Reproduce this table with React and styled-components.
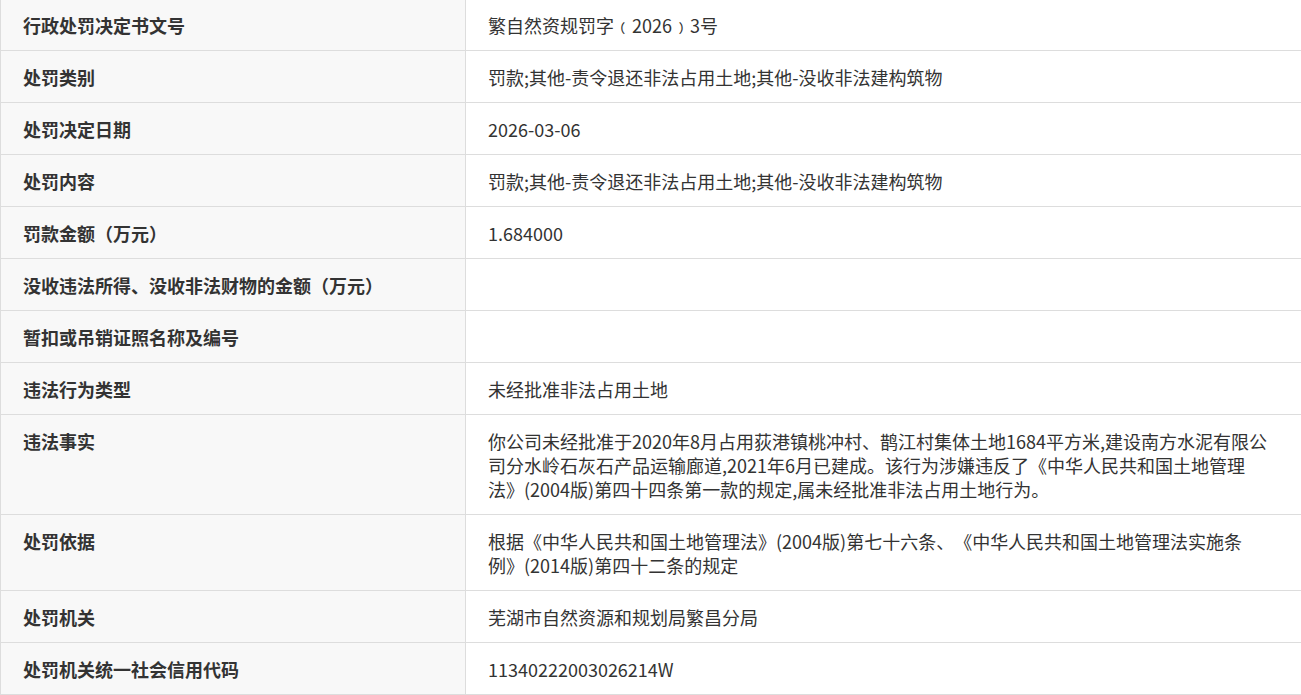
import React from "react";
import styled, { createGlobalStyle } from "styled-components";

const Global = createGlobalStyle`
  html, body { margin: 0; padding: 0; background: #fff; }
  body { font-family: "Microsoft YaHei", "Noto Sans CJK SC", "Noto Sans", sans-serif; }
`;

const Table = styled.table`
  width: 1301px;
  margin-top: -2px;
  border-collapse: collapse;
  table-layout: fixed;
  font-size: 18px;
  line-height: 24px;
  color: #333;
  text-spacing-trim: space-all;
`;

const Row = styled.tr`
  border-top: 1px solid #ddd;
  border-bottom: 1px solid #ddd;
`;

const Label = styled.th`
  width: 465px;
  box-sizing: border-box;
  padding: 14px 22px 13px;
  background: #f8f8f8;
  border-left: 1px solid #ddd;
  border-right: 1px solid #ddd;
  text-align: left;
  vertical-align: top;
  font-weight: 700;
  color: #333;
`;

const Value = styled.td`
  padding: 14px 22px 13px;
  vertical-align: top;
  color: #333;
  background: #fff;
`;

const Line = styled.span`
  display: block;
  white-space: nowrap;
`;

const rows = [
  ["行政处罚决定书文号", "繁自然资规罚字﹙2026﹚3号"],
  ["处罚类别", "罚款;其他-责令退还非法占用土地;其他-没收非法建构筑物"],
  ["处罚决定日期", "2026-03-06"],
  ["处罚内容", "罚款;其他-责令退还非法占用土地;其他-没收非法建构筑物"],
  ["罚款金额（万元）", "1.684000"],
  ["没收违法所得、没收非法财物的金额（万元）", ""],
  ["暂扣或吊销证照名称及编号", ""],
  ["违法行为类型", "未经批准非法占用土地"],
  [
    "违法事实",
    [
      "你公司未经批准于2020年8月占用荻港镇桃冲村、鹊江村集体土地1684平方米,建设南方水泥有限公",
      "司分水岭石灰石产品运输廊道,2021年6月已建成。该行为涉嫌违反了《中华人民共和国土地管理",
      "法》(2004版)第四十四条第一款的规定,属未经批准非法占用土地行为。",
    ],
  ],
  [
    "处罚依据",
    [
      "根据《中华人民共和国土地管理法》(2004版)第七十六条、《中华人民共和国土地管理法实施条",
      "例》(2014版)第四十二条的规定",
    ],
  ],
  ["处罚机关", "芜湖市自然资源和规划局繁昌分局"],
  ["处罚机关统一社会信用代码", "11340222003026214W"],
];

export default function App() {
  return (
    <>
      <Global />
      <Table>
        <tbody>
          {rows.map(([k, v]) => (
            <Row key={k}>
              <Label>{k}</Label>
              <Value>
                {Array.isArray(v)
                  ? v.map((l, i) => <Line key={i}>{l}</Line>)
                  : v || "\u00a0"}
              </Value>
            </Row>
          ))}
        </tbody>
      </Table>
    </>
  );
}
